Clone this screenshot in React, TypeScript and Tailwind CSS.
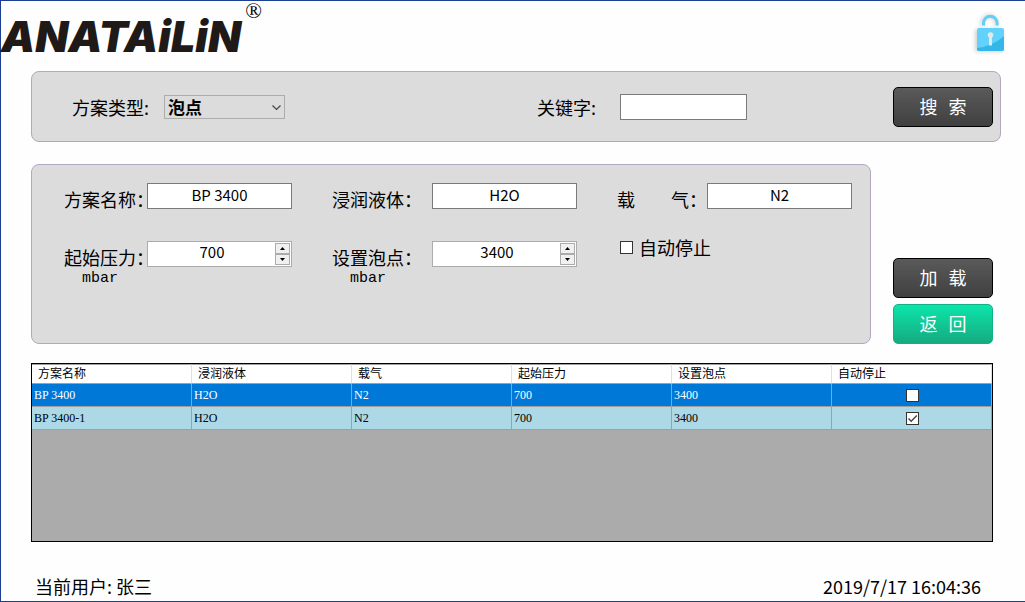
import React, { useState } from "react";
import clsx from "clsx";

type Scheme = {
  name: string;
  liquid: string;
  gas: string;
  pressure: string;
  bubblePoint: string;
  autoStop: boolean;
};

const columns = [
  "方案名称",
  "浸润液体",
  "载气",
  "起始压力",
  "设置泡点",
  "自动停止",
];

const initialSchemes: Scheme[] = [
  {
    name: "BP 3400",
    liquid: "H2O",
    gas: "N2",
    pressure: "700",
    bubblePoint: "3400",
    autoStop: false,
  },
  {
    name: "BP 3400-1",
    liquid: "H2O",
    gas: "N2",
    pressure: "700",
    bubblePoint: "3400",
    autoStop: true,
  },
];

const LockIcon = () => (
  <svg width="40" height="48" viewBox="0 0 40 48" aria-hidden="true">
    <defs>
      <filter id="lockShadow" x="-30%" y="-30%" width="160%" height="160%">
        <feGaussianBlur stdDeviation="2" />
      </filter>
      <clipPath id="lockBody">
        <rect x="8" y="18" width="27" height="23" rx="2" />
      </clipPath>
    </defs>
    <g fill="none" stroke="#000" opacity="0.2" filter="url(#lockShadow)">
      <path d="M13 16v-3a7 7 0 0 1 14 0v3" strokeWidth="3" />
      <rect x="7" y="20" width="26" height="21" fill="#000" />
    </g>
    <path
      d="M14.5 15.5V13a6.8 6.8 0 0 1 13.6 0v2.500"
      fill="none"
      stroke="#62cff6"
      strokeWidth="3"
    />
    <g clipPath="url(#lockBody)">
      <rect x="8" y="18" width="27" height="23" fill="#60d2fb" />
      <path d="M8 38 Q24 36 35 26 V41 H8Z" fill="#34b7e8" />
    </g>
    <circle cx="21.500" cy="25" r="2.800" fill="#e3e8ea" />
    <path d="M20 26h3v9.500h-3z" fill="#e3e8ea" />
  </svg>
);

const Panel = ({
  className,
  children,
}: {
  className?: string;
  children: React.ReactNode;
}) => (
  <section
    className={clsx(
      "rounded-lg border border-[#b4a7c2] bg-[#dcdcdc]",
      className,
    )}
  >
    {children}
  </section>
);

const ActionButton = ({
  children,
  green,
}: {
  children: React.ReactNode;
  green?: boolean;
}) => (
  <button
    type="button"
    className={clsx(
      "h-10 w-[100px] rounded-[5px] border bg-linear-to-b pt-1 font-['Liberation_Mono','Noto_Sans_CJK_SC',sans-serif] text-lg text-white",
      green
        ? "border-[#12b183] from-[#0be5ab] to-[#14ab80]"
        : "border-black from-[#5a5a5a] to-[#404040]",
    )}
  >
    {children}
  </button>
);

const Checkbox = ({
  id,
  label,
  defaultChecked,
}: {
  id: string;
  label?: string;
  defaultChecked?: boolean;
}) => (
  <span className="relative inline-flex size-[13px] shrink-0">
    <input
      id={id}
      type="checkbox"
      aria-label={label}
      defaultChecked={defaultChecked}
      className="peer size-[13px] appearance-none border border-[#333] bg-white"
    />
    <svg
      viewBox="0 0 13 13"
      className="pointer-events-none absolute inset-0 hidden peer-checked:block"
      fill="none"
      stroke="#444"
      strokeWidth="1.4"
    >
      <path d="M2.500 6.500 5.200 9.200 10.800 3.600" />
    </svg>
  </span>
);

const Field = ({
  id,
  label,
  unit,
  children,
}: {
  id: string;
  label: string;
  unit?: string;
  children: React.ReactNode;
}) => (
  <div className="flex items-start">
    <label
      htmlFor={id}
      className="w-0 flex-1 pt-1 text-lg leading-6 whitespace-pre"
    >
      {label}
      {unit && (
        <span className="block w-[72px] text-center font-['Liberation_Mono',monospace] text-[15px] leading-5">
          {unit}
        </span>
      )}
    </label>
    {children}
  </div>
);

const TextInput = ({ id, value }: { id: string; value: string }) => (
  <input
    id={id}
    type="text"
    defaultValue={value}
    className="h-[26px] w-[145px] border border-[#7a7a7a] bg-white pb-1 text-center text-[15px]"
  />
);

const NumberInput = ({ id, initial }: { id: string; initial: number }) => {
  const [value, setValue] = useState(initial);

  return (
    <div className="flex h-[26px] w-[145px] border border-[#acacac] bg-white p-px">
      <input
        id={id}
        type="text"
        inputMode="numeric"
        value={value}
        onChange={(e) => setValue(Number(e.target.value) || 0)}
        className="w-full min-w-0 pb-1 text-center text-[15px]"
      />
      <div className="flex w-[15px] shrink-0 flex-col">
        <button
          type="button"
          aria-label="增加"
          onClick={() => setValue(value + 1)}
          className="flex flex-1 items-center justify-center border border-[#acacac] bg-[#f0f0f0]"
        >
          <svg width="5" height="3" viewBox="0 0 5 3">
            <path d="M0 3 2.500 0 5 3z" />
          </svg>
        </button>
        <button
          type="button"
          aria-label="减少"
          onClick={() => setValue(value - 1)}
          className="flex flex-1 items-center justify-center border border-[#acacac] bg-[#f0f0f0]"
        >
          <svg width="5" height="3" viewBox="0 0 5 3">
            <path d="M0 0h5L2.500 3z" />
          </svg>
        </button>
      </div>
    </div>
  );
};

const SchemeTable = () => {
  const [selected, setSelected] = useState(0);

  return (
    <div className="min-h-[179px] border border-black bg-[#ababab] font-['Liberation_Serif','Noto_Sans_CJK_SC',serif] text-xs leading-4">
      <table className="w-full table-fixed border-separate border-spacing-0">
        <thead>
          <tr className="h-5 bg-white">
            {columns.map((column) => (
              <th
                key={column}
                className="border-t border-r border-b border-t-[#a0a0a0] border-r-[#e0e0e0] border-b-[#a0a0a0] p-0 pl-1.5 text-left font-normal"
              >
                {column}
              </th>
            ))}
          </tr>
        </thead>
        <tbody>
          {initialSchemes.map((scheme, i) => (
            <tr
              key={scheme.name}
              onClick={() => setSelected(i)}
              className={clsx(
                "h-[23px] *:border-r *:border-b *:border-[#a0a0a0] *:p-0 *:pl-0.5",
                selected === i ? "bg-[#0078d7] text-white" : "bg-[#add8e6]",
              )}
            >
              <td>{scheme.name}</td>
              <td>{scheme.liquid}</td>
              <td>{scheme.gas}</td>
              <td>{scheme.pressure}</td>
              <td>{scheme.bubblePoint}</td>
              <td>
                <div className="flex justify-center">
                  <Checkbox
                    id={`autoStop-${i}`}
                    label={`${scheme.name} 自动停止`}
                    defaultChecked={scheme.autoStop}
                  />
                </div>
              </td>
            </tr>
          ))}
        </tbody>
      </table>
    </div>
  );
};

const App = () => {
  return (
    <div className="min-h-screen border-y border-l border-[#1c3f94] bg-[#fefefe] font-['Noto_Sans_CJK_SC',sans-serif] text-black">
      {/* Header */}
      <header className="flex h-[70px] items-start justify-between pr-4">
        <div className="flex items-start gap-1">
          <h1 className="pt-3 font-['Inter',sans-serif] text-[43px] leading-[46px] font-black text-[#1f1a17] italic">
            ANATAiLiN
          </h1>
          <span className="font-['Liberation_Serif',serif] text-[22px] leading-5">
            ®
          </span>
        </div>
        <div className="pt-[9px]">
          <LockIcon />
        </div>
      </header>

      <main className="pl-[30px]">
        {/* Search */}
        <div className="pr-6">
          <Panel className="grid grid-cols-[465fr_356fr_100px] items-center pt-[15px] pr-[7px] pb-[14px] pl-10">
            <div className="flex items-center">
              <label htmlFor="schemeType" className="w-[92px] text-lg">
                方案类型:
              </label>
              <div className="relative">
                <select
                  id="schemeType"
                  className="h-6 w-[121px] appearance-none border border-[#acacac] bg-[#dcdcdc] pl-[3px] text-[17px] leading-5 font-bold"
                >
                  <option>泡点</option>
                </select>
                <svg
                  className="pointer-events-none absolute top-[10px] right-1"
                  width="9"
                  height="6"
                  viewBox="0 0 9 6"
                  fill="none"
                  stroke="#444"
                  strokeWidth="1.2"
                >
                  <path d="M.5.5 4.500 4.500 8.500.5" />
                </svg>
              </div>
            </div>
            <div className="flex items-center">
              <label htmlFor="keyword" className="w-[83px] text-lg">
                关键字:
              </label>
              <input
                id="keyword"
                type="text"
                className="h-[26px] w-[127px] border border-[#7a7a7a] bg-white px-1 text-[15px]"
              />
            </div>
            <ActionButton>搜 索</ActionButton>
          </Panel>
        </div>

        <div className="pr-8">
          {/* Scheme details */}
          <div className="mt-[22px] flex gap-[22px]">
            <Panel className="grid flex-1 grid-cols-[228fr_245fr_235fr] gap-x-10 gap-y-[30px] pt-[18px] pr-[18px] pb-[54px] pl-8">
              <Field id="schemeName" label="方案名称：">
                <TextInput id="schemeName" value="BP 3400" />
              </Field>
              <Field id="liquid" label="浸润液体：">
                <TextInput id="liquid" value="H2O" />
              </Field>
              <Field id="gas" label="载　　气：">
                <TextInput id="gas" value="N2" />
              </Field>
              <Field id="pressure" label="起始压力：" unit="mbar">
                <NumberInput id="pressure" initial={700} />
              </Field>
              <Field id="bubblePoint" label="设置泡点：" unit="mbar">
                <NumberInput id="bubblePoint" initial={3400} />
              </Field>
              <div className="flex h-3 items-center gap-1.5 pl-[3px]">
                <Checkbox id="autoStop" />
                <label htmlFor="autoStop" className="text-lg">
                  自动停止
                </label>
              </div>
            </Panel>

            <div className="flex flex-col justify-end gap-1.5">
              <ActionButton>加 载</ActionButton>
              <ActionButton green>返 回</ActionButton>
            </div>
          </div>

          <div className="mt-[19px]">
            <SchemeTable />
          </div>
        </div>
      </main>

      <footer className="mt-[30px] flex justify-between pr-11 pl-[34px] text-lg leading-7">
        <span>当前用户: 张三</span>
        <time dateTime="2019-07-17T16:04:36">2019/7/17 16:04:36</time>
      </footer>
    </div>
  );
};

export default App;
